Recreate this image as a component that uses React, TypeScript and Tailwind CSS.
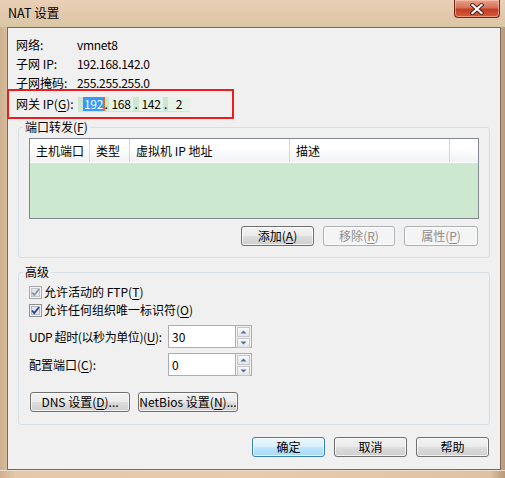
import React from "react";

const FONT = { fontFamily: '"Noto Sans CJK SC", "Noto Sans", sans-serif' };

function Key({ k }: { k: string }) {
  return (
    <>
      (<span className="underline underline-offset-2">{k}</span>)
    </>
  );
}

function Btn({
  children,
  w = "w-[73px]",
  disabled,
  primary,
}: {
  children: React.ReactNode;
  w?: string;
  disabled?: boolean;
  primary?: boolean;
}) {
  const look = disabled
    ? "border-[#adb2b5] bg-[#f4f4f4] text-[#8d8d8d]"
    : primary
      ? "border-[#3c7fb1] bg-[linear-gradient(#eaf6fd_0%,#d9f0fc_50%,#bee6fd_51%,#a7d9f5_100%)] text-black"
      : "border-[#707070] bg-[linear-gradient(#f2f2f2_0%,#ebebeb_50%,#dddddd_51%,#cfcfcf_100%)] text-black";
  return (
    <div
      className={`${w} h-[20px] rounded-[3px] border ${look} flex items-center justify-center text-[12px] leading-[16px] whitespace-nowrap shadow-[inset_0_0_0_1px_rgba(255,255,255,0.7)]`}
    >
      {children}
    </div>
  );
}

function Check({ dim }: { dim?: boolean }) {
  const mark = dim ? "#8a97b4" : "#21409a";
  return (
    <svg width="13" height="13" viewBox="0 0 13 13" className="shrink-0">
      <rect x="0.5" y="0.5" width="12" height="12" fill={dim ? "#f4f4f4" : "#f6f6f6"} stroke={dim ? "#a9a9a9" : "#8e8f8f"} />
      <rect x="2.5" y="2.5" width="8" height="8" fill={dim ? "#e6e6e6" : "#e3e6ea"} stroke={dim ? "#c4c4c4" : "#b4b9c0"} />
      <path d="M3 6.5 L5.2 9 L10 3.2" fill="none" stroke={mark} strokeWidth="1.8" />
    </svg>
  );
}

function Spin({ value }: { value: string }) {
  return (
    <div className="flex h-[23px] shrink-0">
      <div className="w-[67px] h-full border border-[#abadb3] border-r-0 bg-white pl-[3px] flex items-center text-[12px]">
        {value}
      </div>
      <div className="flex flex-col w-[17px] h-full border border-[#abadb3] bg-[#f3f3f3] p-[1px] gap-[1px]">
        {["M2.5 5.5 L5.5 2.5 L8.5 5.5 Z", "M2.5 2.5 L5.5 5.5 L8.5 2.5 Z"].map((d, i) => (
          <div key={i} className="flex-1 border border-[#c4c6cb] bg-[linear-gradient(#fbfbfb,#e4e4e4)] flex items-center justify-center">
            <svg width="11" height="8" viewBox="0 0 11 8">
              <path d={d} fill="#4d6ab2" />
            </svg>
          </div>
        ))}
      </div>
    </div>
  );
}

function Group({ title, children, className = "" }: { title: React.ReactNode; children: React.ReactNode; className?: string }) {
  return (
    <fieldset className={`mx-[10px] border border-[#d5dfe5] rounded-[3px] pl-[10px] pr-[10px] ${className}`}>
      <legend className="ml-[-6px] px-[2px] text-[12px] leading-[16px]">{title}</legend>
      {children}
    </fieldset>
  );
}

export default function App() {
  const info = [
    ["网络:", "vmnet8"],
    ["子网 IP:", "192.168.142.0"],
    ["子网掩码:", "255.255.255.0"],
  ];
  return (
    <div
      style={FONT}
      className="w-[505px] h-[478px] flex flex-col bg-[linear-gradient(90deg,#cdb08f_0%,#e3c8ad_3%,#e6cbb0_50%,#dcc3a8_97%,#b99978_100%)] text-black text-[12px] overflow-hidden"
    >
      {/* title bar */}
      <div className="h-[27px] shrink-0 flex items-start bg-[linear-gradient(#ead0b6,#e2c7ab_60%,#d8c8a4)]">
        <div className="pl-[8px] pt-[5px] text-[12.5px] leading-[16px] text-black">NAT 设置</div>
        <div className="flex-1" />
        <div className="mr-[5px] w-[46px] h-[18px] rounded-b-[4px] border border-t-0 border-[#6b2a1c] bg-[linear-gradient(#e9a38c_0%,#d77157_45%,#c13f24_55%,#d55a3a_100%)] flex items-center justify-center shadow-[inset_0_0_0_1px_rgba(255,210,190,0.5)]">
          <svg width="14" height="12" viewBox="0 0 14 12">
            <path d="M2.5 2 L11.5 10 M11.5 2 L2.5 10" stroke="#4a1b12" strokeWidth="4" strokeLinecap="square" />
            <path d="M2.5 2 L11.5 10 M11.5 2 L2.5 10" stroke="#ffffff" strokeWidth="2.2" strokeLinecap="square" />
          </svg>
        </div>
      </div>

      {/* client area */}
      <div className="ml-[7px] w-[494px] h-[443px] shrink-0 border border-[#7b6a5b] bg-[#f0f0f0] flex flex-col pt-[7px]">
        {info.map(([k, v]) => (
          <div key={k} className="h-[19px] flex items-center pl-[8px] leading-[16px]">
            <div className="w-[61px]">{k}</div>
            <div className="tracking-[-0.3px]">{v}</div>
          </div>
        ))}

        <div className="mt-[-3px] ml-[-1px] w-[227px] h-[30px] border-2 border-[#ee1d1d] flex items-center pl-[7px] leading-[16px]">
          <div className="w-[62px] whitespace-nowrap">
            网关 IP<Key k="G" />:
          </div>
          <div className="w-[112px] h-[15px] bg-[#cde8cf] flex items-center pl-[5px] text-[12px] tracking-[-0.3px]">
            <span className="w-[20px] flex">
              <span className="bg-[#3399ff] text-white px-[1px] leading-[14px] border-r border-[#e07020]">192</span>
            </span>
            <span className="w-[6px] text-center">.</span>
            <span className="w-[24px] bg-[#e6f3e7] text-center leading-[14px]">168</span>
            <span className="w-[6px] text-center">.</span>
            <span className="w-[24px] bg-[#e6f3e7] text-center leading-[14px]">142</span>
            <span className="w-[5px] text-center">.</span>
            <span className="w-[22px] bg-[#e6f3e7] text-center leading-[14px]">2</span>
          </div>
        </div>

        <Group
          title={
            <>
              端口转发<Key k="F" />
            </>
          }
          className="pb-[11px]"
        >
          <div className="mt-[3px] h-[81px] border border-[#828790] bg-[#cce8cf] flex flex-col">
            <div className="h-[24px] flex bg-[linear-gradient(#ffffff_0%,#ffffff_40%,#f1f2f4_100%)] border-b border-[#ffffff] leading-[16px]">
              {[
                ["w-[60px]", "主机端口"],
                ["w-[40px]", "类型"],
                ["w-[160px]", "虚拟机 IP 地址"],
                ["w-[160px]", "描述"],
              ].map(([w, t]) => (
                <div key={t} className={`${w} border-r border-[#d5d5d5] flex items-center pl-[6px]`}>
                  {t}
                </div>
              ))}
              <div className="flex-1" />
            </div>
          </div>
          <div className="mt-[7px] flex justify-end gap-[9px] pr-[1px]">
            <Btn>
              添加<Key k="A" />
            </Btn>
            <Btn w="w-[72px]" disabled>
              移除<Key k="R" />
            </Btn>
            <Btn w="w-[74px]" disabled>
              属性<Key k="P" />
            </Btn>
          </div>
        </Group>

        <Group title="高级" className="mt-[6px] pb-[12px]">
          <div className="mt-[3px] h-[18px] flex items-center gap-[2px] leading-[16px]">
            <Check dim />
            <span>
              允许活动的 FTP<Key k="T" />
            </span>
          </div>
          <div className="h-[18px] flex items-center gap-[2px] leading-[16px]">
            <Check />
            <span>
              允许任何组织唯一标识符<Key k="O" />
            </span>
          </div>
          <div className="mt-[6px] flex items-center leading-[16px]">
            <div className="w-[139px] shrink-0 whitespace-nowrap tracking-[-0.4px]">
              UDP 超时(以秒为单位)<Key k="U" />:
            </div>
            <Spin value="30" />
          </div>
          <div className="mt-[5px] flex items-center leading-[16px]">
            <div className="w-[139px] shrink-0 whitespace-nowrap">
              配置端口<Key k="C" />:
            </div>
            <Spin value="0" />
          </div>
          <div className="mt-[16px] ml-[1px] flex gap-[8px]">
            <Btn w="w-[100px]">
              DNS 设置<Key k="D" />...
            </Btn>
            <Btn w="w-[100px]">
              NetBios 设置<Key k="N" />...
            </Btn>
          </div>
        </Group>

        <div className="mt-[12px] flex justify-end gap-[9px] pr-[11px]">
          <Btn primary>确定</Btn>
          <Btn>取消</Btn>
          <Btn>帮助</Btn>
        </div>
      </div>

      <div className="flex-1 border-t border-[#efdcc8]" />
    </div>
  );
}
